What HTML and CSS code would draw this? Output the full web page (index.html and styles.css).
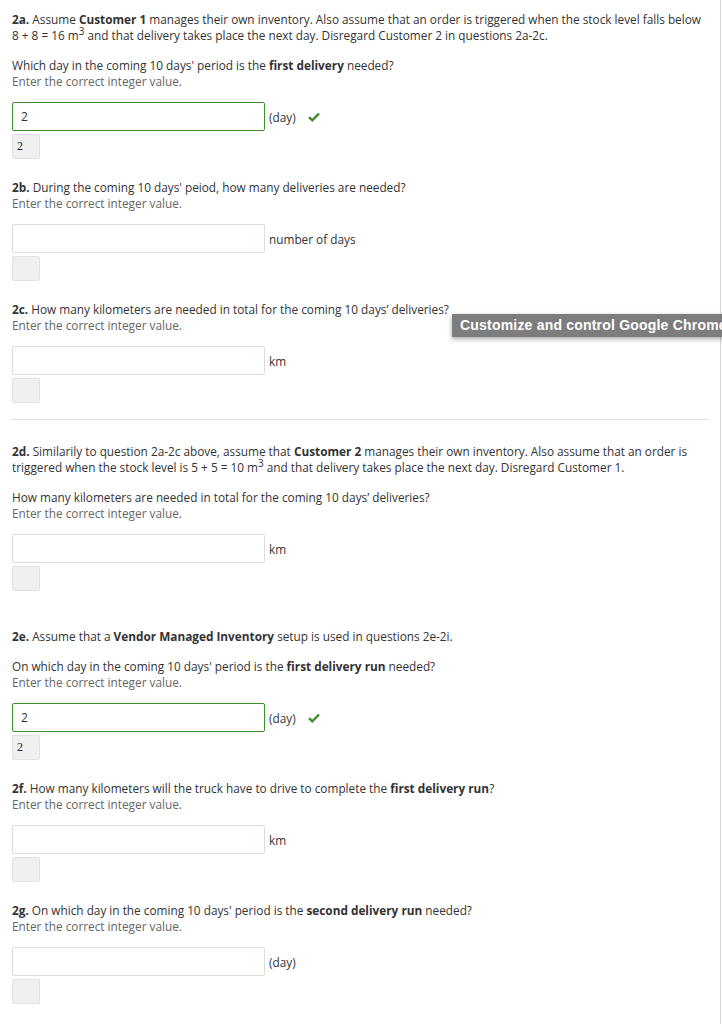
FILE: index.html
```html
<!DOCTYPE html>
<html>
<head>
<meta charset="utf-8">
<link rel="stylesheet" href="styles.css">
</head>
<body>
<div class="page">
  <section class="q">
    <p class="text"><b>2a.</b> Assume <b>Customer 1</b> manages their own inventory. Also assume that an order is triggered when the stock level falls below 8 + 8 = 16 m<sup>3</sup> and that delivery takes place the next day. Disregard Customer 2 in questions 2a-2c.</p>
    <p class="text ask">Which day in the coming 10 days' period is the <b>first delivery</b> needed?</p>
    <p class="hint">Enter the correct integer value.</p>
    <div class="row"><div class="input ok">2</div><span class="unit">(day)</span><svg class="check" width="12" height="10" viewBox="0 0 12 10"><path d="M1 5.2 L4.3 8.3 L11 1.5" fill="none" stroke="#3d8f2b" stroke-width="2.4"/></svg></div>
    <div class="ans">2</div>
  </section>
  <section class="q">
    <p class="text"><b>2b.</b> During the coming 10 days' peiod, how many deliveries are needed?</p>
    <p class="hint">Enter the correct integer value.</p>
    <div class="row"><div class="input"></div><span class="unit">number of days</span></div>
    <div class="ans"></div>
  </section>
  <section class="q tipwrap before-sep">
    <p class="text"><b>2c.</b> How many kilometers are needed in total for the coming 10 days’ deliveries?</p>
    <p class="hint">Enter the correct integer value.</p>
    <div class="row"><div class="input"></div><span class="unit">km</span></div>
    <div class="ans"></div>
    <div class="tooltip">Customize and control Google Chrome</div>
  </section>
  <hr class="sep">
  <section class="q after-sep">
    <p class="text"><b>2d.</b> Similarily to question 2a-2c above, assume that <b>Customer 2</b> manages their own inventory. Also assume that an order is triggered when the stock level is 5 + 5 = 10 m<sup>3</sup> and that delivery takes place the next day. Disregard Customer 1.</p>
    <p class="text ask">How many kilometers are needed in total for the coming 10 days’ deliveries?</p>
    <p class="hint">Enter the correct integer value.</p>
    <div class="row"><div class="input"></div><span class="unit">km</span></div>
    <div class="ans"></div>
  </section>
  <section class="q">
    <p class="text"><b>2e.</b> Assume that a <b>Vendor Managed Inventory</b> setup is used in questions 2e-2i.</p>
    <p class="text ask">On which day in the coming 10 days' period is the <b>first delivery run</b> needed?</p>
    <p class="hint">Enter the correct integer value.</p>
    <div class="row"><div class="input ok">2</div><span class="unit">(day)</span><svg class="check" width="12" height="10" viewBox="0 0 12 10"><path d="M1 5.2 L4.3 8.3 L11 1.5" fill="none" stroke="#3d8f2b" stroke-width="2.4"/></svg></div>
    <div class="ans">2</div>
  </section>
  <section class="q">
    <p class="text"><b>2f.</b> How many kilometers will the truck have to drive to complete the <b>first delivery run</b>?</p>
    <p class="hint">Enter the correct integer value.</p>
    <div class="row"><div class="input"></div><span class="unit">km</span></div>
    <div class="ans"></div>
  </section>
  <section class="q">
    <p class="text"><b>2g.</b> On which day in the coming 10 days' period is the <b>second delivery run</b> needed?</p>
    <p class="hint">Enter the correct integer value.</p>
    <div class="row"><div class="input"></div><span class="unit">(day)</span></div>
    <div class="ans"></div>
  </section>
</div>
</body>
</html>
```
FILE: styles.css
```css
html, body {
  margin: 0;
  padding: 0;
  background: #fff;
}
body {
  font-family: "Open Sans", "Liberation Sans", sans-serif;
  font-size: 11.8px;
  color: #333;
}
.page {
  width: 721px;
  min-height: 1024px;
  padding: 11px 12px 0 12px;
  box-sizing: border-box;
  border-right: 1px solid #d6d6d6;
}
.q {
  margin-bottom: 20px;
}
.q.before-sep {
  margin-bottom: 16px;
}
.q.after-sep {
  margin-top: 23px;
  margin-bottom: 37px;
}
.text {
  margin: 0;
  line-height: 16px;
}
.text sup {
  font-size: 10px;
  line-height: 0;
  vertical-align: 5px;
}
.text.ask {
  margin-top: 14px;
}
.hint {
  margin: 0;
  line-height: 16px;
  color: #666;
}
.row {
  display: flex;
  align-items: center;
  margin-top: 13px;
  height: 29px;
}
.input {
  width: 253px;
  height: 29px;
  box-sizing: border-box;
  border: 1px solid #dcdcdc;
  border-radius: 2px;
  padding-left: 8px;
  font-size: 12px;
  line-height: 27px;
  color: #333;
}
.input.ok {
  border-color: #3d8f2b;
}
.unit {
  margin-left: 4px;
  color: #333;
}
.check {
  margin-left: 12px;
}
.ans {
  margin-top: 3px;
  width: 28px;
  height: 25px;
  box-sizing: border-box;
  background: #f0f0f0;
  border: 1px solid #e2e2e2;
  border-radius: 2px;
  font-family: "Liberation Serif", serif;
  font-size: 12px;
  line-height: 23px;
  padding-left: 4px;
  color: #222;
}
.tipwrap {
  position: relative;
}
.tooltip {
  position: absolute;
  left: 440px;
  top: 13px;
  width: 290px;
  height: 23px;
  box-sizing: border-box;
  background: #7d7d7d;
  color: #fff;
  font-family: "Liberation Sans", Arial, sans-serif;
  font-weight: bold;
  font-size: 14px;
  letter-spacing: 0.2px;
  line-height: 23px;
  padding-left: 8px;
  white-space: nowrap;
  overflow: hidden;
  box-shadow: 0 2px 5px rgba(0,0,0,0.35);
}
.sep {
  margin: 0;
  border: 0;
  border-top: 1px solid #dedede;
  width: 697px;
}
```
